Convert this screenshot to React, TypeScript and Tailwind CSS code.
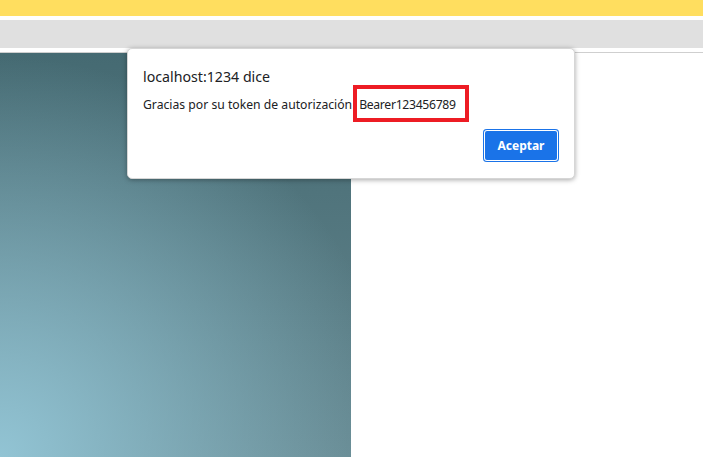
import React from "react";

export default function App() {
  return (
    <div className="relative w-[703px] h-[457px] overflow-hidden bg-white" style={{ fontFamily: '"Noto Sans", "Open Sans", sans-serif' }}>
      <div className="flex flex-col h-full">
        <div className="h-4 bg-[#ffde5f]" />
        <div className="h-1 bg-white" />
        <div className="h-7 bg-[#e0e0e0]" />
        <div className="h-1 bg-white" />
        <div className="flex flex-1 border-t border-[#cfcfcf]">
          <div className="w-[351px] h-full bg-[radial-gradient(circle_at_0%_100%,rgba(146,196,212,1)_0px,rgba(146,196,212,0)_400px),linear-gradient(to_bottom,#456a72,#65878f)]" />
          <div className="flex-1 bg-white" />
        </div>
      </div>

      <div className="absolute left-[127px] top-[48px] w-[448px] h-[131px] bg-white rounded-[5px] shadow-[0_1px_5px_rgba(0,0,0,0.35)] border border-[#d6d6d6] px-[15px] pt-[18px]">
        <div className="text-[14.2px] leading-5 text-[#202124]">localhost:1234 dice</div>
        <div className="mt-[8px] text-[12.2px] leading-5 text-[#202124] whitespace-nowrap">
          <span>Gracias por su token de autorización</span>
          <span className="ml-[7px] tracking-[-0.3px]">Bearer123456789</span>
        </div>
        <div className="flex justify-end mt-[14px] pr-0">
          <button className="w-[76px] h-[33px] rounded-[4px] bg-[#1a73e8] text-white text-[12px] font-bold shadow-[inset_0_0_0_1px_#1a73e8,inset_0_0_0_2px_#ffffff]">
            Aceptar
          </button>
        </div>
        <div className="absolute left-[225px] top-[36px] w-[116px] h-[37px] border-4 border-[#ed1c24]" />
      </div>
    </div>
  );
}
